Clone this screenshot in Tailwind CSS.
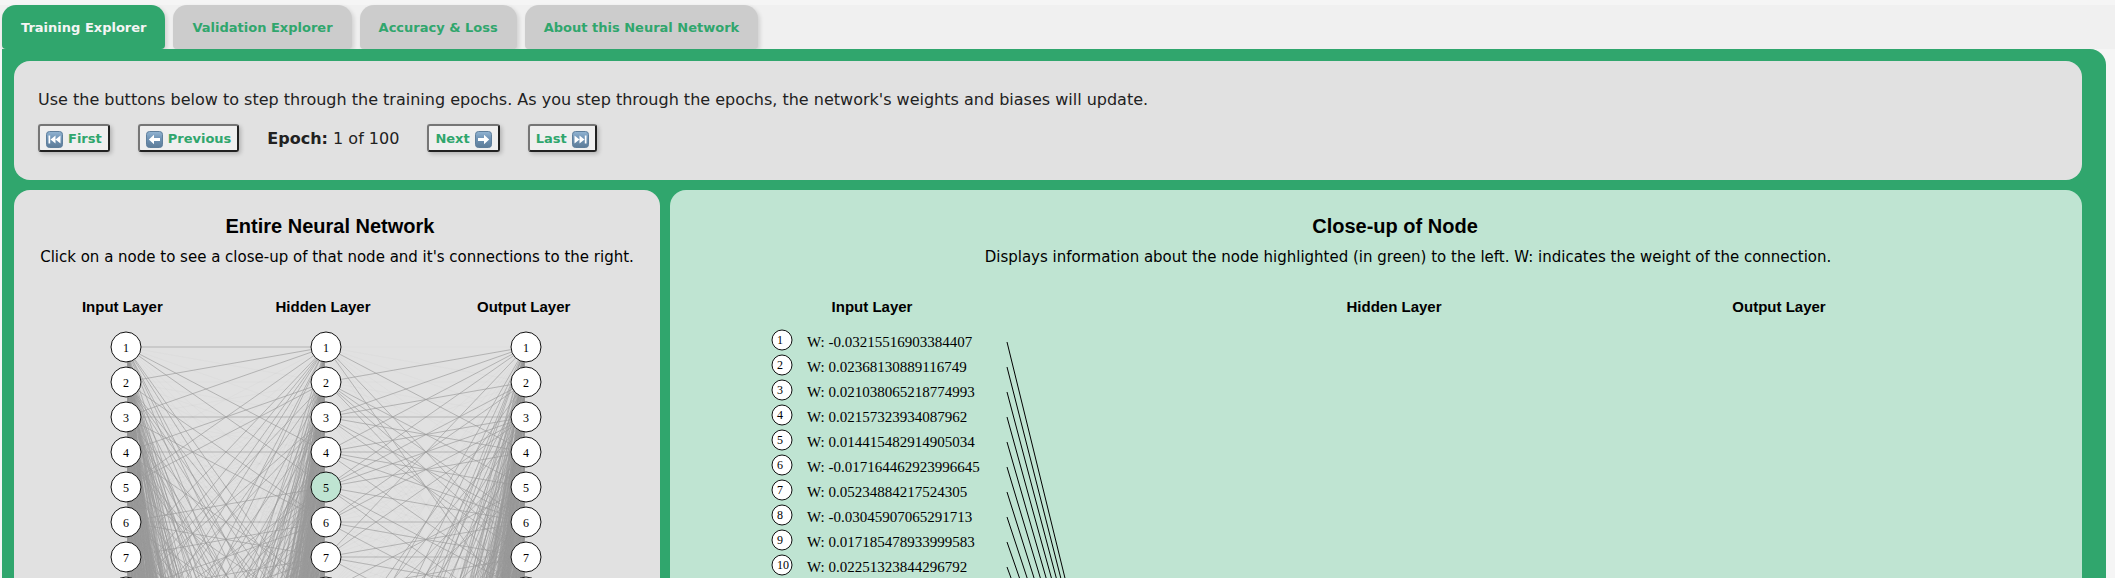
<!DOCTYPE html>
<html lang="en">
<head>
<meta charset="utf-8">
<meta name="viewport" content="width=device-width, initial-scale=1">
<title>Neural Network Explorer</title>
<script src="https://cdn.jsdelivr.net/npm/@tailwindcss/browser@4"></script>
</head>
<body class="h-screen overflow-hidden bg-[#f5f5f5] pt-[5px] font-['DejaVu_Sans',Verdana,sans-serif] text-black">
<svg class="absolute size-0" aria-hidden="true">
  <defs>
    <linearGradient id="key" x1="0" y1="0" x2="0" y2="1">
      <stop offset="0" stop-color="#93b4d2"/><stop offset="0.45" stop-color="#6f93b5"/><stop offset="1" stop-color="#5d7c98"/>
    </linearGradient>
    <symbol id="arrow" viewBox="0 0 17 17">
      <rect x="0.5" y="0.5" width="16" height="16" rx="3" fill="url(#key)" stroke="#5f7f9c"/>
      <path d="M3 7h6V3.8l5.2 4.7L9 13.2V10H3z" fill="#fff"/>
    </symbol>
    <symbol id="skip" viewBox="0 0 17 17">
      <rect x="0.5" y="0.5" width="16" height="16" rx="3" fill="url(#key)" stroke="#5f7f9c"/>
      <path d="M2.5 4.5l5 4-5 4zM7.5 4.5l5 4-5 4zM12.8 4.5h1.7v8h-1.7z" fill="#fff"/>
    </symbol>
  </defs>
</svg>

<nav class="flex h-11 gap-2 bg-[#f0f0f0] pl-0.5 text-[13px] font-bold text-[#30a66d]">
  <button class="rounded-t-[14px] rounded-b bg-[#30a66d] px-[19px] pt-0.5 text-[#f5f5f5] shadow-[2px_2px_4px_#0002]">Training Explorer</button>
  <button class="rounded-t-[14px] rounded-b bg-[#cccccc] px-[19px] pt-0.5 shadow-[2px_2px_4px_#0002]">Validation Explorer</button>
  <button class="rounded-t-[14px] rounded-b bg-[#cccccc] px-[19px] pt-0.5 shadow-[2px_2px_4px_#0002]">Accuracy &amp; Loss</button>
  <button class="rounded-t-[14px] rounded-b bg-[#cccccc] px-[19px] pt-0.5 shadow-[2px_2px_4px_#0002]">About this Neural Network</button>
</nav>

<main class="relative mr-[9px] ml-0.5 flex flex-col gap-2.5 rounded-tr-2xl bg-[#30a66d] pt-3 pr-6 pl-3">
  <section class="rounded-2xl bg-[#e1e1e1] px-6 pt-[27px] pb-7 text-[#212121]">
    <p class="text-base leading-6">Use the buttons below to step through the training epochs. As you step through the epochs, the network's weights and biases will update.</p>
    <div class="mt-3 flex items-center gap-7">
      <button class="flex h-7 items-center gap-[5px] rounded-[3px] border-2 border-t-[#767676] border-r-[#212121] border-b-[#212121] border-l-[#767676] bg-[#efefef] px-1.5 pt-0.5 text-[13px] font-bold text-[#30a66d] shadow-[2px_2px_4px_#0003]"><svg class="size-[17px] -scale-x-100"><use href="#skip"/></svg>First</button>
      <button class="flex h-7 items-center gap-[5px] rounded-[3px] border-2 border-t-[#767676] border-r-[#212121] border-b-[#212121] border-l-[#767676] bg-[#efefef] px-1.5 pt-0.5 text-[13px] font-bold text-[#30a66d] shadow-[2px_2px_4px_#0003]"><svg class="size-[17px] -scale-x-100"><use href="#arrow"/></svg>Previous</button>
      <p class="pt-0.5 text-base leading-6"><b>Epoch:</b> 1 of 100</p>
      <button class="flex h-7 items-center gap-[5px] rounded-[3px] border-2 border-t-[#767676] border-r-[#212121] border-b-[#212121] border-l-[#767676] bg-[#efefef] px-1.5 pt-0.5 text-[13px] font-bold text-[#30a66d] shadow-[2px_2px_4px_#0003]">Next<svg class="size-[17px]"><use href="#arrow"/></svg></button>
      <button class="flex h-7 items-center gap-[5px] rounded-[3px] border-2 border-t-[#767676] border-r-[#212121] border-b-[#212121] border-l-[#767676] bg-[#efefef] px-1.5 pt-0.5 text-[13px] font-bold text-[#30a66d] shadow-[2px_2px_4px_#0003]">Last<svg class="size-[17px]"><use href="#skip"/></svg></button>
    </div>
  </section>

  <div class="flex gap-2.5">
    <section class="w-[646px] shrink-0 rounded-t-2xl bg-[#e1e1e1] pt-[22px]">
      <h2 class="pr-3.5 text-center font-['Liberation_Sans',Arial,sans-serif] text-xl leading-7 font-bold">Entire Neural Network</h2>
      <p class="mt-[5px] text-center text-[15px] leading-6 whitespace-nowrap">Click on a node to see a close-up of that node and it's connections to the right.</p>
      <div class="mt-7 grid grid-cols-3 pr-9 pl-2 text-center font-['Liberation_Sans',Arial,sans-serif] text-[15px] leading-5 font-bold">
        <h3>Input Layer</h3><h3>Hidden Layer</h3><h3>Output Layer</h3>
      </div>
      <svg id="network" class="block h-[2260px] w-full font-['Liberation_Serif','Times_New_Roman',serif] text-xs"></svg>
    </section>

    <section class="min-w-0 flex-1 rounded-t-2xl bg-[#bfe4d2] pt-[22px]">
      <h2 class="pl-[38px] text-center font-['Liberation_Sans',Arial,sans-serif] text-xl leading-7 font-bold">Close-up of Node</h2>
      <p class="mt-[5px] pl-16 text-center text-[15px] leading-6">Displays information about the node highlighted (in green) to the left. W: indicates the weight of the connection.</p>
      <div class="mt-7 grid grid-cols-[404fr_640fr_130fr_238fr] text-center font-['Liberation_Sans',Arial,sans-serif] text-[15px] leading-5 font-bold">
        <h3>Input Layer</h3><h3>Hidden Layer</h3><h3 class="whitespace-nowrap">Output Layer</h3>
      </div>
      <svg id="closeup" class="block h-[2260px] w-full font-['Liberation_Serif','Times_New_Roman',serif] text-[15px]"></svg>
    </section>
  </div>
</main>

<script>
  // Small seeded generator, so the untabulated links are the same on every load.
  let seed = 7;
  const rand = () => (seed = (seed * 48271) % 2147483647) / 2147483647;

  const nodeY = i => 30 + 35 * i;

  const inputToHidden = ['100110001', '100001001', '101001000', '010100010', '110000001', '000011100', '100001000'];
  const hiddenToOutput = ['0001001010', '1000111100', '1111011000', '1011110100', '1111010110', '0110011010', '1010011101'];

  function links(x1, x2, from, to, table) {
    let out = '';
    for (let i = 0; i < from; i++) {
      for (let j = 0; j < to; j++) {
        const known = table[i] && table[i][j];
        const strong = known ? known === '1' : rand() < 0.45;
        out += `<line x1="${x1}" y1="${nodeY(i)}" x2="${x2}" y2="${nodeY(j)}" stroke-opacity="${strong ? 0.65 : 0.05}"/>`;
      }
    }
    return out;
  }

  function nodes(x, count, active) {
    let out = '';
    for (let i = 0; i < count; i++) {
      out += `<circle cx="${x}" cy="${nodeY(i)}" r="15" fill="${i === active ? '#bfe4d2' : '#fff'}" stroke="#111"/>` +
             `<text x="${x}" y="${nodeY(i) + 5}" text-anchor="middle">${i + 1}</text>`;
    }
    return out;
  }

  document.getElementById('network').innerHTML =
    '<g stroke="#999">' + links(112, 312, 64, 64, inputToHidden) + links(312, 512, 64, 10, hiddenToOutput) + '</g>' +
    nodes(112, 64) + nodes(312, 64, 4) + nodes(512, 10);

  const weights = ['-0.03215516903384407', '0.02368130889116749', '0.021038065218774993', '0.02157323934087962',
    '0.014415482914905034', '-0.017164462923996645', '0.05234884217524305', '-0.03045907065291713',
    '0.017185478933999583', '0.02251323844296792'];

  document.getElementById('closeup').innerHTML = weights.map((w, i) => {
    const y = 23 + 25 * i;
    return `<circle cx="112" cy="${y}" r="10" fill="#fff" stroke="#111"/>` +
           `<text x="107" y="${y + 4}" class="text-xs">${i + 1}</text>` +
           `<text x="137" y="${y + 7}">W: ${w}</text>` +
           `<line x1="337" y1="${y + 2}" x2="505" y2="709" stroke="#000"/>`;
  }).join('');
</script>
</body>
</html>
